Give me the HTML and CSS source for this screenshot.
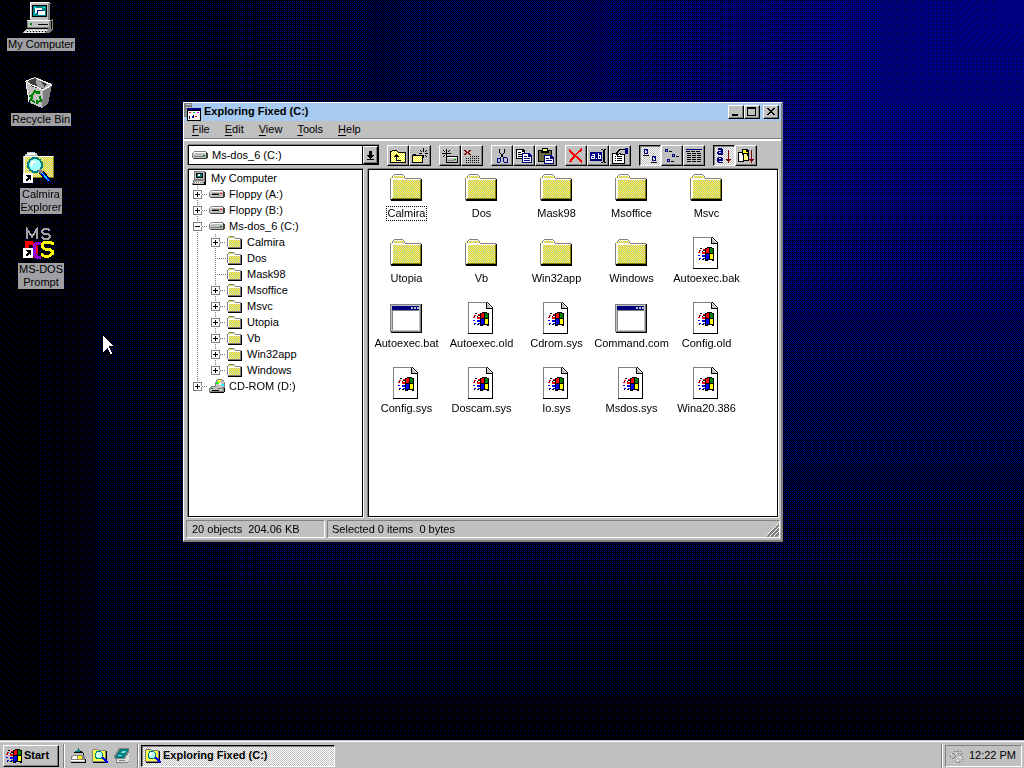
FILE: index.html
```html
<!DOCTYPE html>
<html lang="en">
<head>
  <meta charset="UTF-8" />
  <meta name="viewport" content="width=device-width, initial-scale=1.0" />
  <title>Exploring Fixed (C:)</title>
  <link rel="stylesheet" href="styles.css">
</head>
<body>
  <!-- Shared icons -->
  <svg class="defs" width="0" height="0" aria-hidden="true">
    <defs>
      <pattern id="dither" width="2" height="2" patternUnits="userSpaceOnUse">
        <rect width="2" height="2" fill="#c0c0c0"/>
        <path fill="#ff0" d="M0 0h1v1h-1zM1 1h1v1h-1z"/>
      </pattern>
      <pattern id="dither-odd" width="2" height="2" patternUnits="userSpaceOnUse">
        <rect width="2" height="2" fill="#ff0"/>
        <path fill="#c0c0c0" d="M0 0h1v1h-1zM1 1h1v1h-1z"/>
      </pattern>
      <pattern id="dither-light" width="2" height="2" patternUnits="userSpaceOnUse">
        <rect width="2" height="2" fill="#ff0"/>
        <path fill="#fff" d="M0 0h1v1h-1zM1 1h1v1h-1z"/>
      </pattern>
      <symbol id="flag" viewBox="0 0 16 14">
        <path fill="#000" d="M7 1h2V0h5v1h2v13h-2v-1h-4v1H7z"/>
        <path fill="#f00" d="M8 2h1V1h2v5H8zM5 2h2v1H5zM1 3h2v1H1zM4 5h3v2H4zM0 5h2v1H0z"/>
        <path fill="#008000" d="M12 1h2v1h1v4h-3z"/>
        <path fill="#00f" d="M8 7h3v5H9v1H8zM4 8h3v2H4zM0 8h2v1H0zM5 11h2v1H5zM1 11h2v1H1z"/>
        <path fill="#ff0" d="M12 7h3v5h-3z"/>
        <path fill="#000" d="M5 3h2v1H5zM2 1h2v1H2zM4 4h1v1H4zM1 4h1v1H1zM4 12h2v1H4zM1 12h1v1H1z"/>
      </symbol>
      <symbol id="folder" viewBox="0 0 32 32">
        <path fill="url(#dither)" d="M1 5h2V4h1V3h8v1h1v1h1v1h17v22H1z"/>
        <path fill="#808080" d="M4 2h9v1H4zM3 3h1v1H3zM2 4h1v2H2zM13 3h1v1h-1zM14 4h1v2h-1zM15 6h16v1H15zM0 6h1v22H0z"/>
        <path fill="#fff" d="M4 3h9v1H4zM3 4h1v2H3zM1 6h14v1H1zM1 7h1v20H1zM2 7h28v1H2zM2 8h1v18H2z"/>
        <path fill="#808000" d="M30 8h1v19H2v-1h28z"/>
        <path fill="#000" d="M31 7h1v22H1v-2h30z"/>
      </symbol>
      <symbol id="document" viewBox="0 0 32 32">
        <path fill="#fff" d="M4 1h18l5 5v24H4z"/>
        <path fill="#808080" d="M3 0h20v1H4v30H3z"/>
        <path fill="#000" d="M28 6v26H3v-1h24V7h-6V1h1v5h5V5h1zM22 0h1v1h1v1h1v1h1v1h1v1h1v1h-1V5h-1V4h-1V3h-1V2h-1V1h-1z"/>
        <path fill="#c0c0c0" d="M22 2h1v1h1v1h1v1h1v1h-4z"/>
        <use href="#flag" x="8" y="10" width="16" height="14"/>
      </symbol>
      <symbol id="program" viewBox="0 0 32 32">
        <path fill="#000" d="M0 2h32v29H1v-1H0z"/>
        <path fill="#808080" d="M0 2h31v28H0z"/>
        <path fill="#c0c0c0" d="M1 3h29v26H1z"/>
        <path fill="#808080" d="M2 8h27v20H2z"/>
        <path fill="#fff" d="M3 9h26v19H3z"/>
        <path fill="#000080" d="M2 4h27v4H2z"/>
        <path fill="#c0c0c0" d="M21 5h2v2h-2zM24 5h2v2h-2zM27 5h2v2h-2z"/>
      </symbol>
      <symbol id="folder-small" viewBox="0 0 16 16">
        <path fill="url(#dither-odd)" d="M1 4h13v9H1zM2 3h5v1H2z"/>
        <path fill="#808080" d="M2 2h5v1H2zM1 3h1v1H1zM7 3h1v1H7zM8 4h6v1H8zM0 4h1v9H0z"/>
        <path fill="#fff" d="M1 4h7v1H1zM1 5h12v1H1zM1 6h1v7H1z"/>
        <path fill="#808080" d="M13 5h1v9H1v-1h12z"/>
        <path fill="#000" d="M14 5h1v10H1v-1h13z"/>
      </symbol>
      <symbol id="drive" viewBox="0 0 16 16">
        <path fill="#808080" d="M2 4h12v1h1v6h-1v1H1v-1H0V6h1V5h1z"/>
        <path fill="#fff" d="M2 5h12v1H2zM1 6h1v1H1z"/>
        <path fill="#c0c0c0" d="M2 6h12v1H2zM1 7h13v4H1z"/>
        <path fill="#808080" d="M2 9h11v1H2z"/>
        <path fill="#404040" d="M14 5h1v1h1v5h-1v1H2v-1h12z"/>
        <path fill="#008000" d="M11 8h2v1h-2z"/>
      </symbol>
      <symbol id="floppy" viewBox="0 0 16 16">
        <use href="#drive" width="16" height="16"/>
        <path fill="#c0c0c0" d="M2 9h11v1H2zM11 8h2v1h-2z"/>
        <path fill="#808080" d="M3 7h7v1H3z"/>
        <path fill="#000" d="M3 8h7v1H3z"/>
        <path fill="#f00" d="M11 7h2v1h-2z"/>
      </symbol>
      <symbol id="cdrom" viewBox="0 0 16 16">
        <path fill="#808080" d="M2 8h12l2 2v3l-1 2H1l-1-2v-3z"/>
        <path fill="#c0c0c0" d="M2 9h12v4H1v-3z"/>
        <path fill="#000" d="M15 10h1v4h-1v1H1v-1h14zM3 12h7v1H3z"/>
        <path fill="#808080" d="M8 1h5v1h2v2h1v5h-2v2H8V9H6V4h1V2h1z"/>
        <path fill="#c0c0c0" d="M8 2h5v1h2v6h-2v1H8V9H7V4h1z"/>
        <path fill="#ff0" d="M9 2h3l-1 3h-1z"/>
        <path fill="#0f0" d="M7 4h2l1 2H7z"/>
        <path fill="#0ff" d="M12 6h3v2h-2z"/>
        <path fill="#fff" d="M10 5h2v2h-2z"/>
        <path fill="#008000" d="M2 10h2v1H2z"/>
      </symbol>
      <symbol id="computer-small" viewBox="0 0 16 16">
        <path fill="#808080" d="M2 1h11v9H2zM1 10h12v5H0v-2h1z"/>
        <path fill="#c0c0c0" d="M3 2h9v7H3zM2 11h10v1H2zM2 13h10v1H2z"/>
        <path fill="#000" d="M4 3h7v5H4zM13 2h1v9h-1zM13 11h1v4H1v-1h11v-2h1z"/>
        <path fill="#008080" d="M5 4h5v3H5z"/>
        <path fill="#fff" d="M6 4h2v2H6zM3 12h1v1H3zM5 12h1v1H5zM7 12h1v1H7zM9 12h1v1H9z"/>
      </symbol>
      <symbol id="search-folder" viewBox="0 0 16 16">
        <path fill="#808080" d="M0 2h1V1h5v1h8v12H0z"/>
        <path fill="#ffff40" d="M1 2h5v1h7v10H1z"/>
        <path fill="#000" d="M14 3h1v12H1v-1h13z"/>
        <path fill="#008080" d="M4 3h5v1h1v1h1v5h-1v1H4v-1H3V5h1z"/>
        <path fill="#c0ffff" d="M5 4h4v1h1v4H9v1H5V9H4V5h1z"/>
        <path fill="#fff" d="M5 5h2v1H6v2H5z"/>
        <path fill="#00f" d="M10 9h2v1h1v1h1v1h1v1h1v2h-2v-1h-1v-1h-1v-1h-1v-1h-1z"/>
      </symbol>
      <symbol id="shortcut" viewBox="0 0 10 10">
        <path fill="#fff" d="M0 0h10v10H0z"/>
        <path fill="#000" d="M3 2h5v5H7V6H6v1H5v1H3V6h1V5h1V4H4V3H3z"/>
      </symbol>
    </defs>
  </svg>

  <canvas id="wallpaper" class="wallpaper"></canvas>

  <main class="desktop">
    <nav class="shortcuts" aria-label="Desktop">
      <button class="shortcut">
        <svg class="icon-large" viewBox="0 0 32 32">
          <path fill="#808080" d="M7 0h20v1h1v17H7z"/>
          <path fill="#c0c0c0" d="M8 1h17v17H8z"/>
          <path fill="#fff" d="M7 0h19v1H7zM7 1h1v16H7z"/>
          <path fill="#000" d="M9 3h15v12H9zM27 2h1v16h-1z"/>
          <path fill="#008080" d="M10 4h13v10H10z"/>
          <path fill="#0ff" d="M11 5h2v1h-2zM20 5h2v1h-2zM11 11h2v1h-2z"/>
          <path fill="#fff" d="M12 6h7v5h-7zM15 9h7v4h-7z"/>
          <path fill="#000080" d="M14 8h5v1h-5zM14 8h1v4h-1z"/>
          <path fill="#808080" d="M4 18h24l2-1v10l-3 4H3v-3l2-2H4z"/>
          <path fill="#c0c0c0" d="M5 19h21v6H5z"/>
          <path fill="#fff" d="M4 18h23v1H4z"/>
          <path fill="#000" d="M15 22h10v1H15zM28 19h1v8h-1zM4 26h21v1H4z"/>
          <path fill="#008000" d="M7 21h2v2H7z"/>
          <path fill="#c0c0c0" d="M3 27h22l-3 4H0z"/>
          <path stroke="#fff" stroke-width="1" stroke-dasharray="2 1" fill="none" d="M4 28.500h21M2 30.500h20"/>
          <path stroke="#000" stroke-width="1" stroke-dasharray="1 2" fill="none" d="M4 29.500h20"/>
        </svg>
        <span>My Computer</span>
      </button>
      <button class="shortcut">
        <svg class="icon-large" viewBox="0 0 32 32">
          <path fill="#c0c0c0" d="M3 4l9-4 17 7-4 20-6 4-12-5z"/>
          <path fill="#808080" d="M20 14l9-6-4 19-6 4z"/>
          <path fill="#404040" d="M5 4l7-3 12 6-5 5-10-2z"/>
          <path fill="#a0a0a4" d="M13 2h4l5 9h-8z"/>
          <path fill="none" stroke="#fff" stroke-width="1" d="M3 4l8-3M13 1l16 7-9 5L3 5l3 20"/>
          <path fill="none" stroke="#008000" stroke-width="2" d="M9 18l3-4 3 3M17 19l1 5-4 1M12 25l-4-2 1-3"/>
          <path fill="#008000" d="M13 14h4v3h-4zM13 23h2v4h-2zM6 18h4v2H6z"/>
        </svg>
        <span>Recycle Bin</span>
      </button>
      <button class="shortcut">
        <svg class="icon-large" viewBox="0 0 32 32">
          <path fill="#c0c0c0" d="M0 4h2V2h2V0h8v1h2v2h1v1h16v22H0z"/>
          <path fill="url(#dither)" d="M2 5h28v21H2z"/>
          <path fill="#fff" d="M4 1h8v2H4zM1 4h29v1H1zM1 5h1v18H1z"/>
          <path fill="#808000" d="M30 5h1v21H10v-1h20z"/>
          <circle cx="12" cy="13" r="7" fill="#a0ffff" stroke="#008080" stroke-width="2"/>
          <path fill="#fff" d="M8 9h5v2h-3v3H8z"/>
          <path fill="none" stroke="#000" stroke-width="5" d="M18 20l7 8"/>
          <path fill="none" stroke="#808080" stroke-width="3" d="M16 18l4 4"/>
          <path fill="none" stroke="#00f" stroke-width="3" d="M19 21l7 8"/>
          <path fill="none" stroke="#0ff" stroke-width="1" d="M19 21l7 8"/>
          <use href="#shortcut" y="21" width="10" height="10"/>
        </svg>
        <span>Calmira<br>Explorer</span>
      </button>
      <button class="shortcut">
        <svg class="icon-large" viewBox="0 0 32 32">
          <path fill="none" stroke="#a0a0a4" stroke-width="2" d="M4 12V2l5 8 5-8v10M27 4l-2-2h-4l-2 2v1l2 2h4l2 2v1l-2 2h-4l-2-2"/>
          <path fill="none" stroke="#f00" stroke-width="4" d="M4 30V16h5l4 4v6l-3 4"/>
          <path fill="none" stroke="#8000ff" stroke-width="3" d="M18 16h-5l-2 3v8l3 3h4"/>
          <path fill="none" stroke="#f00" stroke-width="1" stroke-dasharray="1 2" d="M18 16h-5l-2 3v8l3 3h4"/>
          <path fill="none" stroke="#ff0" stroke-width="3" d="M29 18v-2l-3-1h-4l-3 2v3l3 2h4l3 2v3l-3 2h-5l-3-2"/>
          <use href="#shortcut" y="21" width="10" height="10"/>
        </svg>
        <span>MS-DOS<br>Prompt</span>
      </button>
    </nav>

    <section class="window">
      <header class="title-bar">
        <svg class="title-icon" viewBox="0 0 17 18">
          <path fill="#808080" d="M0 0h8v14H0z"/>
          <path fill="#c0c0c0" d="M2 1h5v1H2zM2 4h5v1H2zM2 7h2v1H2zM2 10h1v1H2z"/>
          <path fill="#000" d="M3 5h14v13H3z"/>
          <path fill="#fff" d="M4 8h12v9H4z"/>
          <path fill="#000080" d="M3 5h14v2H3z"/>
          <path fill="#f00" d="M5 9h2v1H5zM11 13h2v1h-2z"/>
          <path fill="#0c0" d="M9 9h2v1H9z"/>
          <path fill="#f0f" d="M13 9h2v1h-2z"/>
          <path fill="#00f" d="M8 13h1v2H8z"/>
          <path fill="#000" d="M5 13h1v3H5zM9 12h1v3H9z"/>
        </svg>
        <h1>Exploring Fixed (C:)</h1>
        <div class="title-buttons">
          <button aria-label="Minimize"><svg viewBox="0 0 12 10"><path d="M2 7h6v2H2z"/></svg></button>
          <button aria-label="Maximize"><svg viewBox="0 0 12 10"><path fill-rule="evenodd" d="M1 0h9v9H1zM2 2v6h7V2z"/></svg></button>
          <button class="close" aria-label="Close"><svg viewBox="0 0 12 10"><path d="M2 1h2v1h1v1h2V2h1V1h2v1H9v1H8v1H7v1h1v1h1v1h1v1H8V7H7V6H5v1H4v1H2V7h1V6h1V5h1V4H4V3H3V2H2z"/></svg></button>
        </div>
      </header>
      <nav class="menu-bar" aria-label="Menu">
        <button><u>F</u>ile</button>
        <button><u>E</u>dit</button>
        <button><u>V</u>iew</button>
        <button><u>T</u>ools</button>
        <button><u>H</u>elp</button>
      </nav>
      <div class="tool-bar">
        <div class="drive-box">
          <svg class="icon-small"><use href="#drive"/></svg>
          <select aria-label="Drive"><option>Ms-dos_6 (C:)</option></select>
          <span class="drop-arrow"><svg viewBox="0 0 7 9"><path d="M2 0h3v4h2v1H6v1H5v1H4v1H3V7H2V6H1V5H0V4h2zM0 8h7v1H0z"/></svg></span>
        </div>
        <div class="tool-group">
          <button aria-label="Up one level"><svg viewBox="0 0 16 16"><path fill="#000" d="M1 3h1V2h5v1h1v1h8v11H0V3z"/><path fill="url(#dither-light)" d="M2 3h5v1h1v1h7v9H1V4h1z"/><path fill="#000" d="M6 6h1v1h1v1h1v1H7v3h4v1H6V9H4V8h1V7h1z"/></svg></button>
          <button aria-label="New folder"><svg viewBox="0 0 16 16"><path fill="#000" d="M0 7h1V6h3v1h7v8H0z"/><path fill="url(#dither-light)" d="M1 8h9v6H1z"/><path fill="#000" d="M11 0h1v4h-1zM11 7h1v3h-1zM7 5h3v1H7zM13 5h3v1h-3zM8 2h1v1h1v1H9V3H8zM14 2h1v1h-1v1h-1V3h1zM13 7h1v1h1v1h-1V8h-1z"/></svg></button>
        </div>
        <div class="tool-group">
          <button aria-label="Map network drive"><svg viewBox="0 0 16 16"><path fill="#000" d="M5 8h11v7H4V9h1z"/><path fill="#c0c0c0" d="M5 9h10v5H5z"/><path fill="#fff" d="M6 9h9v1H6z"/><path fill="#808080" d="M6 12h7v1H6z"/><path fill="#0a0" d="M12 11h2v1h-2z"/><path fill="#000" d="M4 1h1v8H4zM0 5h9v1H0zM1 2h1v1h1v1H2V3H1zM7 2h1v1H7v1H6V3h1zM1 8h1V7h1v1H2v1H1z"/></svg></button>
          <button aria-label="Disconnect drive"><svg viewBox="0 0 16 16"><path fill="#800000" d="M0 2h2v1h1v1h1V3h1V2h2v1H6v1H5v1h1v1h1v1H5V6H4V5H3v1H2v1H0V6h1V5h1V4H1V3H0z"/><path stroke="#000" stroke-dasharray="1 1" d="M6 8.500h9M2 10.500h13M2 12.500h13M2 14.500h13"/></svg></button>
        </div>
        <div class="tool-group">
          <button aria-label="Cut"><svg viewBox="0 0 16 16"><path fill="none" stroke="#000" d="M5.500 1v3l4 6M10.500 1v3l-4 6"/><path fill="none" stroke="#000080" stroke-width="1" d="M6 10H4l-1 1v3h3l1-2zM10 9h2l1 1v4h-3l-1-2z"/></svg></button>
          <button aria-label="Copy"><svg viewBox="0 0 16 16"><path fill="#000" d="M0 1h7l2 2v8H0z"/><path fill="#fff" d="M1 2h5v2h2v6H1z"/><path fill="#000" d="M2 4h3v1H2zM2 6h5v1H2zM2 8h4v1H2z"/><path fill="#000080" d="M6 5h7l3 3v7H6z"/><path fill="#fff" d="M7 6h5v3h3v5H7z"/><path fill="#000080" d="M8 8h3v1H8zM8 10h6v1H8zM8 12h6v1H8z"/></svg></button>
          <button aria-label="Paste"><svg viewBox="0 0 16 16"><path fill="#000" d="M0 2h4V0h6v2h4v12H0z"/><path fill="#6b6b40" d="M1 3h12v10H1z"/><path fill="#ffff80" d="M5 1h4v2H5z"/><path fill="#000" d="M3 3h8v2H3z"/><path fill="#000080" d="M6 7h7l3 3v6H6z"/><path fill="#fff" d="M7 8h5v3h3v4H7z"/><path fill="#000080" d="M8 10h3v1H8zM8 12h6v1H8z"/></svg></button>
        </div>
        <div class="tool-group">
          <button aria-label="Delete"><svg viewBox="0 0 16 16"><path fill="none" stroke="#f00" stroke-width="2" d="M1 2l13 12M14 1C9 5 5 9 2 14"/></svg></button>
          <button aria-label="Rename"><svg viewBox="0 0 16 16"><path fill="#000080" d="M0 4h12v9H0z"/><path fill="#fff" d="M2 6h3v5H1V8h3V7H2zM2 9v1h2V9zM6 10h1v1H6zM8 5h1v2h2v4H8zM9 8v2h1V8z"/><path fill="#000" d="M11 1h2v1h1V1h2v1h-1v12h1v1h-2v-1h-1v1h-2v-1h2V2h-2z"/></svg></button>
          <button aria-label="Properties"><svg viewBox="0 0 16 16"><path fill="#000" d="M0 5h13v11H0z"/><path fill="#fff" d="M1 6h11v9H1z"/><path fill="#000" d="M3 8h1v1H3zM5 8h5v1H5zM3 10h1v1H3zM5 10h5v1H5zM3 12h1v1H3zM5 12h5v1H5zM4 4l4-3h5v6H9L7 6 5 8 4 7z"/><path fill="#c0c0c0" d="M6 4l3-2h4v4H9L8 4 6 6z"/><path fill="#000080" d="M13 0h3v6h-3z"/></svg></button>
        </div>
        <div class="tool-group">
          <button class="pressed" aria-label="Large icons"><svg viewBox="0 0 16 16"><path fill="#000080" fill-rule="evenodd" d="M2 1h3l1 1v4H2zM3 2v3h2V3H4V2zM10 8h3l1 1v4h-4zM11 9v3h2v-2h-1V9z"/><path fill="#000" d="M1 7h6v1H1zM9 14h6v1H9z"/></svg></button>
          <button aria-label="List"><svg viewBox="0 0 16 16"><path fill="#000080" fill-rule="evenodd" d="M1 1h3v3H1zM2 2v1h1V2zM8 6h3v3H8zM9 7v1h1V7zM3 11h3v3H3zM4 12v1h1v-1z"/><path fill="#000" d="M5 3h3v1H5zM12 8h3v1h-3zM7 13h3v1H7z"/></svg></button>
          <button aria-label="Details"><svg viewBox="0 0 16 16"><path fill="#000080" d="M0 1h16v1H0z"/><path stroke="#000" stroke-dasharray="4 1" d="M0 3.500h15M1 5.500h14M1 7.500h14M1 9.500h14M1 11.500h14M1 13.500h14"/></svg></button>
        </div>
        <div class="tool-group">
          <button class="pressed" aria-label="Sort by name"><svg viewBox="0 0 16 16"><path fill="#000080" fill-rule="evenodd" d="M2 0h4v1h1v6H2V6H1V4h1V3h3V2H2zM3 4v1h2V4zM2 9h4v1h1v3H3v1h4v1H2v-1H1v-4h1zM3 10v1h2v-1z"/><path fill="#800000" d="M12 2h1v9h2v1h-1v1h-1v2h-1v-2h-1v-1h-1v-1h2z"/></svg></button>
          <button aria-label="Sort by type"><svg viewBox="0 0 16 16"><path fill="#000" d="M4 1h5l2 2v8H4z"/><path fill="#ff0" d="M5 2h3v2h2v6H5z"/><path fill="#000" d="M0 4h4l2 2v8H0z"/><path fill="#fff" d="M1 5h3v2h1v6H1z"/><path fill="#000" d="M5 5h4l2 2v6H5z"/><path fill="#ffff80" d="M6 6h3v2h1v4H6z"/><path fill="#800000" d="M13 2h1v9h2v1h-1v1h-1v2h-1v-2h-1v-1h-1v-1h2z"/></svg></button>
        </div>
      </div>

      <div class="panes">
        <div class="tree-pane">
          <div class="root"><svg class="icon-small"><use href="#computer-small"/></svg><span>My Computer</span></div>
          <ul class="branch">
            <li><div class="node"><button class="expand" aria-label="Expand"></button><svg class="icon-small"><use href="#floppy"/></svg><span>Floppy (A:)</span></div></li>
            <li><div class="node"><button class="expand" aria-label="Expand"></button><svg class="icon-small"><use href="#floppy"/></svg><span>Floppy (B:)</span></div></li>
            <li>
              <div class="node"><button class="expand open" aria-label="Collapse"></button><svg class="icon-small"><use href="#drive"/></svg><span>Ms-dos_6 (C:)</span></div>
              <ul class="branch">
                <li><div class="node"><button class="expand" aria-label="Expand"></button><svg class="icon-small"><use href="#folder-small"/></svg><span>Calmira</span></div></li>
                <li><div class="node"><i class="leaf"></i><svg class="icon-small"><use href="#folder-small"/></svg><span>Dos</span></div></li>
                <li><div class="node"><i class="leaf"></i><svg class="icon-small"><use href="#folder-small"/></svg><span>Mask98</span></div></li>
                <li><div class="node"><button class="expand" aria-label="Expand"></button><svg class="icon-small"><use href="#folder-small"/></svg><span>Msoffice</span></div></li>
                <li><div class="node"><button class="expand" aria-label="Expand"></button><svg class="icon-small"><use href="#folder-small"/></svg><span>Msvc</span></div></li>
                <li><div class="node"><button class="expand" aria-label="Expand"></button><svg class="icon-small"><use href="#folder-small"/></svg><span>Utopia</span></div></li>
                <li><div class="node"><button class="expand" aria-label="Expand"></button><svg class="icon-small"><use href="#folder-small"/></svg><span>Vb</span></div></li>
                <li><div class="node"><button class="expand" aria-label="Expand"></button><svg class="icon-small"><use href="#folder-small"/></svg><span>Win32app</span></div></li>
                <li><div class="node"><button class="expand" aria-label="Expand"></button><svg class="icon-small"><use href="#folder-small"/></svg><span>Windows</span></div></li>
              </ul>
            </li>
            <li><div class="node"><button class="expand" aria-label="Expand"></button><svg class="icon-small"><use href="#cdrom"/></svg><span>CD-ROM (D:)</span></div></li>
          </ul>
        </div>
        <div class="file-pane">
          <button class="file focused"><svg class="icon-large"><use href="#folder"/></svg><span>Calmira</span></button>
          <button class="file"><svg class="icon-large"><use href="#folder"/></svg><span>Dos</span></button>
          <button class="file"><svg class="icon-large"><use href="#folder"/></svg><span>Mask98</span></button>
          <button class="file"><svg class="icon-large"><use href="#folder"/></svg><span>Msoffice</span></button>
          <button class="file"><svg class="icon-large"><use href="#folder"/></svg><span>Msvc</span></button>
          <button class="file"><svg class="icon-large"><use href="#folder"/></svg><span>Utopia</span></button>
          <button class="file"><svg class="icon-large"><use href="#folder"/></svg><span>Vb</span></button>
          <button class="file"><svg class="icon-large"><use href="#folder"/></svg><span>Win32app</span></button>
          <button class="file"><svg class="icon-large"><use href="#folder"/></svg><span>Windows</span></button>
          <button class="file"><svg class="icon-large"><use href="#document"/></svg><span>Autoexec.bak</span></button>
          <button class="file"><svg class="icon-large"><use href="#program"/></svg><span>Autoexec.bat</span></button>
          <button class="file"><svg class="icon-large"><use href="#document"/></svg><span>Autoexec.old</span></button>
          <button class="file"><svg class="icon-large"><use href="#document"/></svg><span>Cdrom.sys</span></button>
          <button class="file"><svg class="icon-large"><use href="#program"/></svg><span>Command.com</span></button>
          <button class="file"><svg class="icon-large"><use href="#document"/></svg><span>Config.old</span></button>
          <button class="file"><svg class="icon-large"><use href="#document"/></svg><span>Config.sys</span></button>
          <button class="file"><svg class="icon-large"><use href="#document"/></svg><span>Doscam.sys</span></button>
          <button class="file"><svg class="icon-large"><use href="#document"/></svg><span>Io.sys</span></button>
          <button class="file"><svg class="icon-large"><use href="#document"/></svg><span>Msdos.sys</span></button>
          <button class="file"><svg class="icon-large"><use href="#document"/></svg><span>Wina20.386</span></button>
        </div>
      </div>

      <footer class="status-bar">
        <div class="status-count">20 objects&nbsp; 204.06 KB</div>
        <div class="status-selected">Selected 0 items&nbsp; 0 bytes
          <svg class="grip" viewBox="0 0 13 13"><path stroke="#808080" stroke-width="2" d="M1 13L13 1M5 13l8-8M9 13l4-4"/><path stroke="#fff" d="M0 12L12 0M4 12l9-9M8 12l5-5"/></svg>
        </div>
      </footer>
    </section>

    <svg class="cursor" viewBox="0 0 11 19"><path fill="#fff" d="M0 0h1v1h1v1h1v1h1v1h1v1h1v1h1v1h1v1h1v1h1v1H6v2h1v2h1v2h1v2H7v-2H6v-2H5v-2H4v1H3v1H2v1H1v1H0z"/></svg>
  </main>

  <footer class="task-bar">
    <button class="start-button"><svg width="16" height="14"><use href="#flag"/></svg>Start</button>
    <div class="quick-launch">
      <button aria-label="Show desktop"><svg class="icon-small" viewBox="0 0 16 16"><path fill="#008080" d="M5 3h2V2h1V0h1v2h1v2H4z"/><path fill="#000" d="M4 4h7v1H4zM10 3h2v1h1v1h1v3h-1V5h-2V4h-1z"/><path fill="#808080" d="M3 7h11v1h1v4H1V8h2z"/><path fill="#fff" d="M3 8h4v3H2V9h1z"/><path fill="#ff0" d="M8 8h4v3H8z"/><path fill="#c0c0c0" d="M0 12h15v2H0z"/><path fill="#fff" d="M1 12h13v1H1z"/><path fill="#000" d="M15 11h1v4H1v-1h14z"/></svg></button>
      <button aria-label="Explorer"><svg class="icon-small"><use href="#search-folder"/></svg></button>
      <button aria-label="Notepad"><svg class="icon-small" viewBox="0 0 16 16"><path fill="#808080" d="M5 0h10v13l-2 2H2v-3l-2-2V8z"/><path fill="#008080" d="M6 1h9l-5 9H1z"/><path fill="#80e0e0" d="M8 3h4l-1 2H7zM4 7h4l-1 1H4z"/><path fill="#dfdfdf" d="M3 11h8l4-7v9l-2 1H3z"/><path fill="#808080" d="M5 12h6v1H5z"/></svg></button>
    </div>
    <button class="task-button"><svg class="icon-small"><use href="#search-folder"/></svg>Exploring Fixed (C:)</button>
    <div class="tray-area">
      <div class="tray">
        <svg class="icon-small" viewBox="0 0 16 16"><path fill="none" stroke="#808080" stroke-width="1" stroke-dasharray="2 1" d="M1 8l3-3 3 3-3 3zM5 3h4v3l4 1 2 4-3 3H8l-2-3M11 3l3 3"/><path fill="#fff" d="M2 6h1v1H2zM7 5h1v1H7zM10 9h2v1h-2zM7 12h2v1H7z"/></svg>
        <time>12:22 PM</time>
      </div>
    </div>
  </footer>

  <script src="script.js"></script>
</body>
</html>
```
FILE: styles.css
```css
* {
  box-sizing: border-box;
}

body {
  margin: 0;
  height: 100vh;
  display: flex;
  flex-direction: column;
  overflow: hidden;
  background-color: #000;
  color: #000;
  font-family: "Liberation Sans", Arial, sans-serif;
  font-size: 11px;
  line-height: 13px;
}

button,
select {
  margin: 0;
  padding: 0;
  border: none;
  background: none;
  color: inherit;
  font: inherit;
}

svg {
  display: block;
  flex: none;
  shape-rendering: crispEdges;
}

.defs {
  position: absolute;
}

.icon-small {
  width: 16px;
  height: 16px;
}

.icon-large {
  width: 32px;
  height: 32px;
}

/* Desktop */
.wallpaper {
  position: fixed;
  top: 0;
  left: 0;
  z-index: -1;
}

.desktop {
  position: relative;
  flex: 1;
  min-height: 0;
}

.shortcuts {
  display: flex;
  flex-direction: column;
  width: 82px;
  padding-top: 2px;
}

.shortcut {
  display: flex;
  flex-direction: column;
  align-items: center;
  height: 75px;
  gap: 4px;
}

.shortcut .icon-large {
  margin-right: 4px;
}

.shortcut span {
  padding: 0 1px;
  background-color: #a0a0a4;
}

.cursor {
  position: absolute;
  left: 103px;
  top: 336px;
  width: 11px;
  height: 19px;
}

/* Window */
.window {
  position: absolute;
  left: 183px;
  top: 102px;
  width: 600px;
  height: 440px;
  display: flex;
  flex-direction: column;
  background-color: #c0c0c0;
  border: 1px solid #fff;
  border-right: 2px solid #808080;
  border-bottom: 2px solid #808080;
}

.title-bar {
  display: flex;
  align-items: center;
  height: 18px;
  padding-right: 2px;
  background-color: #a6caf0;
}

.title-icon {
  width: 17px;
  height: 18px;
}

.title-bar h1 {
  flex: 1;
  margin: 0;
  padding: 0 0 2px 3px;
  font-size: 11px;
  font-weight: bold;
}

.title-buttons {
  display: flex;
}

.title-buttons button,
.tool-group button,
.drop-arrow,
.start-button {
  background-color: #c0c0c0;
  border: 1px solid;
  border-color: #fff #000 #000 #fff;
  box-shadow: inset -1px -1px #808080;
}

.title-buttons button {
  width: 16px;
  height: 14px;
  padding: 1px;
}

.title-buttons svg {
  width: 12px;
  height: 10px;
}

.title-buttons .close {
  margin-left: 3px;
}

.menu-bar {
  display: flex;
  gap: 1px;
  height: 18px;
  padding: 0 1px 1px;
  border-bottom: 1px solid #808080;
}

.menu-bar button {
  padding: 0 7px;
}

.menu-bar u {
  text-underline-offset: 2px;
}

.tool-bar {
  display: flex;
  align-items: flex-start;
  gap: 8px;
  height: 30px;
  padding: 4px 4px 0 4px;
  border-top: 2px solid #fff;
}

.tool-group {
  display: flex;
}

.tool-group button {
  width: 22px;
  height: 21px;
  padding: 2px;
}

.tool-group svg {
  width: 16px;
  height: 16px;
}

.tool-group .pressed,
.task-button {
  background: conic-gradient(#fff 25%, #c0c0c0 0 50%, #fff 0 75%, #c0c0c0 0) 0 0 / 2px 2px;
  border-color: #000 #fff #fff #000;
  box-shadow: inset 1px 1px #808080;
}

.drive-box {
  display: flex;
  align-items: center;
  width: 191px;
  height: 20px;
  padding-left: 3px;
  background-color: #fff;
  border: 1px solid #000;
  box-shadow: 0 -1px #808080, -1px 0 #808080;
}

.drive-box select {
  flex: 1;
  height: 18px;
  padding-left: 4px;
  appearance: none;
}

.drop-arrow {
  display: flex;
  align-items: center;
  justify-content: center;
  width: 15px;
  height: 18px;
  outline: 1px solid #000;
}

.drop-arrow svg {
  width: 7px;
  height: 9px;
}

.panes {
  flex: 1;
  min-height: 0;
  display: flex;
  gap: 5px;
  padding: 0 3px 0 4px;
}

.tree-pane,
.file-pane {
  background-color: #fff;
  border: 1px solid #000;
  box-shadow: 0 -1px #808080, -1px 0 #808080, 1px 1px #fff;
}

.tree-pane {
  width: 175px;
  line-height: 16px;
}

.root,
.node {
  display: flex;
  height: 16px;
}

.root {
  gap: 3px;
  padding-left: 3px;
}

.branch {
  margin: 0;
  padding: 0 0 0 4px;
  list-style: none;
  background: repeating-linear-gradient(#808080 0 1px, #fff 1px 2px) 8px 0 / 1px calc(100% - 8px) no-repeat;
}

.branch .branch {
  padding-left: 18px;
  background-position: 22px 0;
}

.node {
  align-items: center;
}

.node span {
  padding-left: 4px;
}

.expand {
  width: 9px;
  height: 9px;
  border: 1px solid #808080;
  background:
    linear-gradient(#000, #000) center / 5px 1px no-repeat,
    linear-gradient(#000, #000) center / 1px 5px no-repeat,
    #fff;
}

.expand.open {
  background: linear-gradient(#000, #000) center / 5px 1px no-repeat, #fff;
}

.leaf {
  width: 5px;
  margin-left: 4px;
  height: 1px;
  background: repeating-linear-gradient(90deg, #808080 0 1px, #fff 1px 2px);
}

.expand + svg,
.leaf + svg {
  margin-left: 7px;
}

.node > :first-child {
  position: relative;
}

/* dotted stub that joins the box to its icon */
.node > :first-child::after {
  content: "";
  position: absolute;
  left: 100%;
  top: 3px;
  width: 7px;
  height: 1px;
  background: repeating-linear-gradient(90deg, #fff 0 1px, #808080 1px 2px);
}

.node > .leaf:first-child::after {
  top: 0;
}

.file-pane {
  flex: 1;
  display: grid;
  grid-template-columns: repeat(auto-fill, 75px);
  grid-auto-rows: 65px;
  padding-top: 2px;
}

.file {
  display: flex;
  flex-direction: column;
  align-items: center;
  gap: 2px;
  white-space: nowrap;
}

.file .icon-large {
  margin-right: 1px;
}

.file span {
  padding: 0 1px;
  border: 1px solid transparent;
}

.file.focused span {
  border: 1px dotted #000;
}

.status-bar {
  display: flex;
  gap: 2px;
  margin-top: 3px;
  padding: 0 1px 2px 2px;
}

.status-count,
.status-selected {
  height: 18px;
  padding-left: 5px;
  line-height: 16px;
  border: 1px solid;
  border-color: #808080 #fff #fff #808080;
}

.status-count {
  width: 139px;
}

.status-selected {
  position: relative;
  flex: 1;
  padding-left: 4px;
}

.grip {
  position: absolute;
  right: 0;
  bottom: 0;
  width: 13px;
  height: 13px;
}

/* Task bar */
.task-bar {
  display: flex;
  align-items: center;
  height: 28px;
  padding: 2px 2px 0 3px;
  background-color: #c0c0c0;
  border-top: 1px solid #c0c0c0;
  box-shadow: inset 0 1px #fff;
}

.start-button {
  display: flex;
  align-items: center;
  gap: 2px;
  width: 56px;
  height: 22px;
  padding-left: 2px;
  font-weight: bold;
}

.quick-launch {
  display: flex;
  gap: 6px;
  height: 24px;
  align-items: center;
  margin: 0 3px 0 4px;
  padding: 0 7px 0 6px;
  border-left: 1px solid #808080;
  border-right: 1px solid #808080;
  box-shadow: inset 1px 0 #fff, 1px 0 #fff;
}

.task-button {
  display: flex;
  align-items: center;
  gap: 2px;
  width: 194px;
  height: 22px;
  padding-left: 3px;
  border: 1px solid;
  border-color: #000 #fff #fff #000;
  font-weight: bold;
}

.tray-area {
  height: 24px;
  margin-left: auto;
  padding: 1px 0 1px 3px;
  border-left: 1px solid #808080;
  box-shadow: inset 1px 0 #fff;
}

.tray {
  display: flex;
  align-items: center;
  gap: 4px;
  height: 22px;
  padding: 0 5px 0 3px;
  border: 1px solid;
  border-color: #808080 #fff #fff #808080;
}
```
FILE: script.js
```js
const canvas = document.getElementById("wallpaper");

// 8x8 ordered dither matrix
const bayer = [
  [0, 32, 8, 40, 2, 34, 10, 42],
  [48, 16, 56, 24, 50, 18, 58, 26],
  [12, 44, 4, 36, 14, 46, 6, 38],
  [60, 28, 52, 20, 62, 30, 54, 22],
  [3, 35, 11, 43, 1, 33, 9, 41],
  [51, 19, 59, 27, 49, 17, 57, 25],
  [15, 47, 7, 39, 13, 45, 5, 37],
  [63, 31, 55, 23, 61, 29, 53, 21],
];

// Navy fades to black away from the top right corner
function drawWallpaper() {
  const w = (canvas.width = window.innerWidth);
  const h = (canvas.height = window.innerHeight);
  const ctx = canvas.getContext("2d");
  const image = ctx.createImageData(w, h);

  for (let y = 0; y < h; y++) {
    for (let x = 0; x < w; x++) {
      const level = Math.min(x / w, 1 - y / h) * 64 + 1;
      const i = (y * w + x) * 4;
      image.data[i + 2] = level > 63 - bayer[y % 8][x % 8] ? 128 : 0;
      image.data[i + 3] = 255;
    }
  }
  ctx.putImageData(image, 0, 0);
}

window.addEventListener("resize", drawWallpaper);
drawWallpaper();
```
